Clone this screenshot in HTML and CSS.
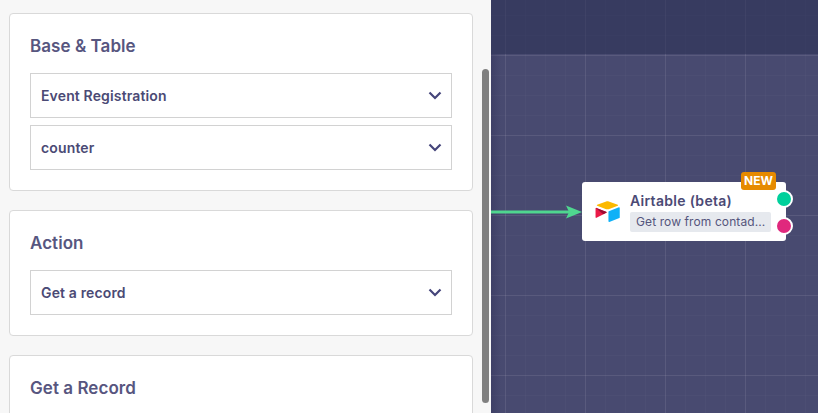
FILE: index.html
```html
<!DOCTYPE html>
<html lang="en">
<head>
<meta charset="utf-8">
<title>Airtable step</title>
<link rel="stylesheet" href="styles.css">
</head>
<body>
<div class="app">
  <aside class="panel">
    <div class="panel-scroll">
      <section class="card">
        <h2 class="card-title">Base &amp; Table</h2>
        <div class="select"><span>Event Registration</span><svg class="chev" viewBox="0 0 14 9"><path d="M1.5 1.5 7 7l5.5-5.5"/></svg></div>
        <div class="select"><span>counter</span><svg class="chev" viewBox="0 0 14 9"><path d="M1.5 1.5 7 7l5.5-5.5"/></svg></div>
      </section>
      <section class="card">
        <h2 class="card-title">Action</h2>
        <div class="select"><span>Get a record</span><svg class="chev" viewBox="0 0 14 9"><path d="M1.5 1.5 7 7l5.5-5.5"/></svg></div>
      </section>
      <section class="card">
        <h2 class="card-title">Get a Record</h2>
      </section>
    </div>
    <div class="scrollbar"></div>
  </aside>
  <main class="canvas">
    <div class="topbar"></div>
    <div class="edge"></div>
    <svg class="arrow" viewBox="0 0 91 14"><path class="arrow-line" d="M0 7h78"/><path class="arrow-head" d="M91 7 75 0.5l3 6.5-3 6.5z"/></svg>
    <div class="node">
      <svg class="logo" viewBox="0 0 28 23">
        <path fill="#fcb900" d="M12.6 .4 3.2 3.9c-.5.2-.5.9 0 1.1l9.4 3.5c.9.3 1.8.3 2.7 0L24.7 5c.5-.2.5-.9 0-1.1L15.3.4c-.8-.3-1.8-.3-2.7 0z"/>
        <path fill="#0fb1f7" d="M15 11.3v10c0 .5.5.8.9.6l10.5-4.1c.3-.1.4-.3.4-.6V7.2c0-.5-.5-.8-.9-.6l-10.5 4.1c-.3.1-.4.3-.4.6z"/>
        <path fill="#ea1b48" d="M12.8 12.2 9.6 13.8l-.3.2-6.8 3.6c-.4.2-1-.1-1-.6V7.8c0-.2.1-.3.2-.4.1-.1.1-.1.2-.1.2-.1.4-.1.5 0l10.3 4.1c.5.2.6.6.1.8z"/>
        <path fill="#9c0d33" d="M12.8 12.2 9.6 13.8 1.7 7.3c.1-.1.1-.1.2-.1.2-.1.4-.1.5 0l10.3 4.1c.5.2.6.6.1.9z"/>
      </svg>
      <div class="node-body">
        <div class="node-title">Airtable (beta)</div>
        <div class="node-sub">Get row from contad...</div>
      </div>
      <span class="badge">NEW</span>
      <span class="port port-ok"></span>
      <span class="port port-err"></span>
    </div>
  </main>
</div>
</body>
</html>
```

FILE: styles.css
```css
* { box-sizing: border-box; }
html, body { margin: 0; height: 100%; overflow: hidden; }
body { font-family: "Inter", "Liberation Sans", sans-serif; color: #4b4a75; }
.app { display: flex; height: 413px; width: 818px; }

.panel { position: relative; flex: 0 0 491px; background: #f7f7f7; overflow: hidden; }
.panel-scroll { padding: 13px 18px 0 9px; display: flex; flex-direction: column; gap: 19px; }
.card { background: #fff; border: 1px solid #d9d9d9; border-radius: 4px; padding: 20px; display: flex; flex-direction: column; gap: 7px; }
.card-title { margin: 0 0 7px; font-size: 17px; line-height: 24px; height: 25px; font-weight: 600; letter-spacing: .05px; color: #57567f; }
.select { height: 45px; border: 1px solid #d2d2d2; display: flex; align-items: center; justify-content: space-between; padding: 0 9px 1px 10px; font-size: 14px; font-weight: 600; letter-spacing: .14px; color: #4b4a75; }
.chev { width: 14px; height: 9px; fill: none; stroke: #45457a; stroke-width: 2.2; }
.scrollbar { position: absolute; left: 482px; top: 69px; width: 7px; height: 334px; border-radius: 4px; background: #808080; }

.canvas {
  position: relative; flex: 1; overflow: hidden;
  background-color: #484a70;
  background-image:
    linear-gradient(rgba(255,255,255,.07) 1px, transparent 1px),
    linear-gradient(90deg, rgba(255,255,255,.07) 1px, transparent 1px),
    linear-gradient(rgba(255,255,255,.018) 1px, transparent 1px),
    linear-gradient(90deg, rgba(255,255,255,.018) 1px, transparent 1px);
  background-size: 80px 80px, 80px 80px, 20px 20px, 20px 20px;
  background-position: 0 55px, 14px 0, 0 15px, 14px 0;
}
.topbar { height: 54px; background: rgba(42, 48, 84, .55); }
.edge { position: absolute; left: 0; top: 54px; bottom: 0; width: 10px; background: linear-gradient(90deg, rgba(40,40,80,.3), transparent); }
.arrow { position: absolute; left: 0; top: 205px; width: 91px; height: 14px; }
.arrow-line { stroke: #4fd68f; stroke-width: 3; fill: none; }
.arrow-head { fill: #4fd68f; }

.node { position: absolute; left: 91px; top: 182px; width: 204px; height: 59px; background: #fff; border-radius: 3px; display: flex; align-items: center; padding: 0 15px 0 12px; gap: 9px; }
.logo { width: 27px; height: 22px; flex: none; }
.node-body { min-width: 0; display: flex; flex-direction: column; gap: 2px; }
.node-title { font-size: 14px; line-height: 18px; font-weight: 600; letter-spacing: .3px; color: #4b4a75; }
.node-sub { width: 141px; height: 20px; background: #e6e9ee; border-radius: 2px; font-size: 12px; line-height: 20px; padding-left: 6px; letter-spacing: .1px; color: #55557c; white-space: nowrap; overflow: hidden; }
.badge { position: absolute; left: 159px; top: -10px; width: 35px; height: 18px; background: #e68a00; border-radius: 3px; color: #fff; font-size: 12px; line-height: 18px; font-weight: 700; text-align: center; }
.port { position: absolute; left: 193px; width: 18px; height: 18px; border-radius: 50%; border: 2px solid #fff; }
.port-ok { top: 8px; background: #00d09c; }
.port-err { top: 35px; background: #e0287d; }
```
